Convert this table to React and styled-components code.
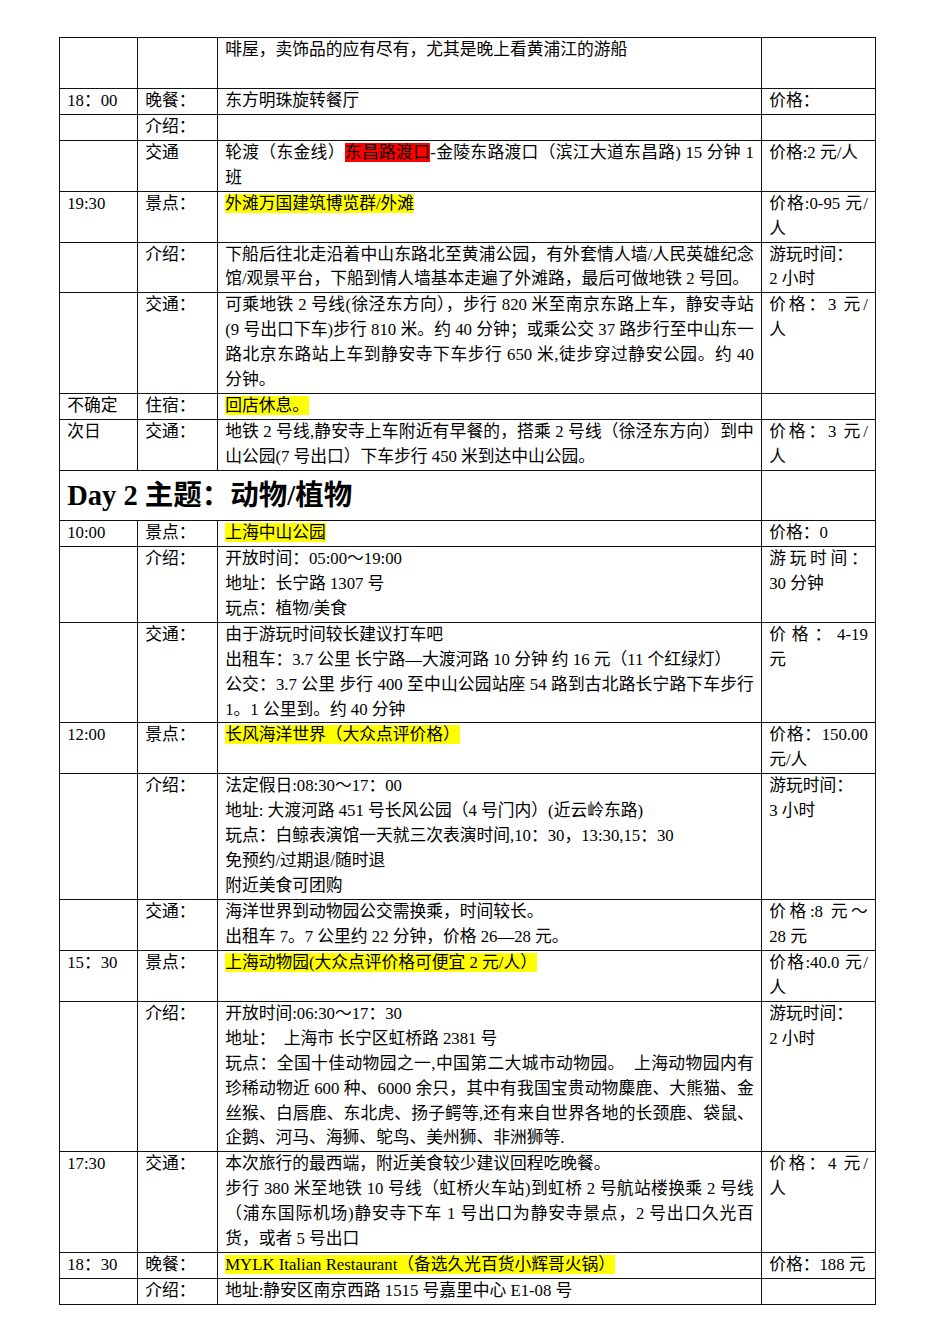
import React from "react"
import styled, { createGlobalStyle } from "styled-components"

const GlobalStyle = createGlobalStyle`
    body {
        margin: 0;
        background: #fff;
        color: #000;
        font-family: "Liberation Serif", "Noto Sans CJK SC", serif;
    }
`

const Page = styled.div`
    padding: 37px 0 39px 59px;
`

const Sheet = styled.table`
    border-collapse: collapse;
    table-layout: fixed;
    width: 816px;
    font-size: 16.76px;
    line-height: 24.94px;
`

const Cell = styled.td`
    border: 1px solid #111;
    padding: 0 7.2px;
    vertical-align: top;
    text-align: ${(p) => (p.$justify ? "justify" : "left")};
    word-break: normal;
`

const Heading = styled.td`
    border: 1px solid #111;
    padding: 0 7.2px;
    height: 49px;
    font-size: 28.5px;
    font-weight: bold;
    line-height: 49px;
    vertical-align: middle;
`

const Para = styled.div`
    min-height: 24.94px;
`

const Mark = styled.span`
    background: ${(p) => (p.$tone === "red" ? "#ff0000" : "#ffff00")};
`

const Y = ({ children }) => <Mark>{children}</Mark>
const R = ({ children }) => <Mark $tone="red">{children}</Mark>

const rows = [
    {
        time: "",
        label: "",
        detail: ["啡屋，卖饰品的应有尽有，尤其是晚上看黄浦江的游船", ""],
        price: "",
    },
    { time: "18：00", label: "晚餐：", detail: ["东方明珠旋转餐厅"], price: "价格：" },
    { time: "", label: "介绍：", detail: [""], price: "" },
    {
        time: "",
        label: "交通",
        detail: [
            <>
                轮渡（东金线）<R>东昌路渡口</R>-金陵东路渡口（滨江大道东昌路) 15 分钟 1 班
            </>,
        ],
        price: "价格:2 元/人",
    },
    {
        time: "19:30",
        label: "景点：",
        detail: [<Y>外滩万国建筑博览群/外滩</Y>],
        price: "价格:0-95 元/人",
    },
    {
        time: "",
        label: "介绍：",
        detail: [
            "下船后往北走沿着中山东路北至黄浦公园，有外套情人墙/人民英雄纪念馆/观景平台，下船到情人墙基本走遍了外滩路，最后可做地铁 2 号回。",
        ],
        price: ["游玩时间：", "2 小时"],
    },
    {
        time: "",
        label: "交通：",
        detail: [
            "可乘地铁 2 号线(徐泾东方向），步行 820 米至南京东路上车，静安寺站(9 号出口下车)步行 810 米。约 40 分钟；或乘公交 37 路步行至中山东一路北京东路站上车到静安寺下车步行 650 米,徒步穿过静安公园。约 40 分钟。",
        ],
        price: "价格：3 元/人",
    },
    { time: "不确定", label: "住宿：", detail: [<Y>回店休息。</Y>], price: "" },
    {
        time: "次日",
        label: "交通：",
        detail: [
            "地铁 2 号线,静安寺上车附近有早餐的，搭乘 2 号线（徐泾东方向）到中山公园(7 号出口）下车步行 450 米到达中山公园。",
        ],
        price: "价格：3 元/人",
    },
    { heading: "Day 2 主题：动物/植物" },
    { time: "10:00", label: "景点：", detail: [<Y>上海中山公园</Y>], price: "价格：0" },
    {
        time: "",
        label: "介绍：",
        detail: ["开放时间：05:00～19:00", "地址：长宁路 1307 号", "玩点：植物/美食"],
        price: "游玩时间：30 分钟",
    },
    {
        time: "",
        label: "交通：",
        detail: [
            "由于游玩时间较长建议打车吧",
            "出租车：3.7 公里 长宁路—大渡河路 10 分钟 约 16 元（11 个红绿灯）",
            "公交：3.7 公里 步行 400 至中山公园站座 54 路到古北路长宁路下车步行 1。1 公里到。约 40 分钟",
        ],
        price: "价格：4-19 元",
    },
    {
        time: "12:00",
        label: "景点：",
        detail: [<Y>长风海洋世界（大众点评价格）</Y>],
        price: "价格：150.00 元/人",
    },
    {
        time: "",
        label: "介绍：",
        detail: [
            "法定假日:08:30～17：00",
            "地址: 大渡河路 451 号长风公园（4 号门内）(近云岭东路)",
            "玩点：白鲸表演馆一天就三次表演时间,10：30，13:30,15：30",
            "免预约/过期退/随时退",
            "附近美食可团购",
        ],
        price: ["游玩时间：", "3 小时"],
    },
    {
        time: "",
        label: "交通：",
        detail: ["海洋世界到动物园公交需换乘，时间较长。", "出租车 7。7 公里约 22 分钟，价格 26—28 元。"],
        price: "价格:8 元～28 元",
    },
    {
        time: "15：30",
        label: "景点：",
        detail: [<Y>上海动物园(大众点评价格可便宜 2 元/人）</Y>],
        price: "价格:40.0 元/人",
    },
    {
        time: "",
        label: "介绍：",
        detail: [
            "开放时间:06:30～17：30",
            "地址：　上海市 长宁区虹桥路 2381 号",
            "玩点：全国十佳动物园之一,中国第二大城市动物园。\u00a0 上海动物园内有珍稀动物近 600 种、6000 余只，其中有我国宝贵动物麋鹿、大熊猫、金丝猴、白唇鹿、东北虎、扬子鳄等,还有来自世界各地的长颈鹿、袋鼠、企鹅、河马、海狮、鸵鸟、美州狮、非洲狮等.",
        ],
        price: ["游玩时间：", "2 小时"],
    },
    {
        time: "17:30",
        label: "交通：",
        detail: [
            "本次旅行的最西端，附近美食较少建议回程吃晚餐。",
            "步行 380 米至地铁 10 号线（虹桥火车站)到虹桥 2 号航站楼换乘 2 号线（浦东国际机场)静安寺下车 1 号出口为静安寺景点，2 号出口久光百货，或者 5 号出口",
        ],
        price: "价格：4 元/人",
    },
    {
        time: "18：30",
        label: "晚餐：",
        detail: [<Y>MYLK Italian Restaurant（备选久光百货小辉哥火锅）</Y>],
        price: "价格：188 元",
    },
    {
        time: "",
        label: "介绍：",
        detail: ["地址:静安区南京西路 1515 号嘉里中心 E1-08 号"],
        price: "",
    },
]

const lines = (value) => (Array.isArray(value) ? value : [value])

export default function App() {
    return (
        <Page>
            <GlobalStyle />
            <Sheet>
                <colgroup>
                    <col style={{ width: 78 }} />
                    <col style={{ width: 80 }} />
                    <col style={{ width: 544 }} />
                    <col style={{ width: 114 }} />
                </colgroup>
                <tbody>
                    {rows.map((row, i) =>
                        row.heading ? (
                            <tr key={i}>
                                <Heading colSpan={3}>{row.heading}</Heading>
                                <Cell />
                            </tr>
                        ) : (
                            <tr key={i}>
                                <Cell>{row.time}</Cell>
                                <Cell>{row.label}</Cell>
                                <Cell $justify>
                                    {row.detail.map((d, j) => (
                                        <Para key={j}>{d}</Para>
                                    ))}
                                </Cell>
                                <Cell $justify>
                                    {lines(row.price).map((p, j) => (
                                        <Para key={j}>{p}</Para>
                                    ))}
                                </Cell>
                            </tr>
                        )
                    )}
                </tbody>
            </Sheet>
        </Page>
    )
}
